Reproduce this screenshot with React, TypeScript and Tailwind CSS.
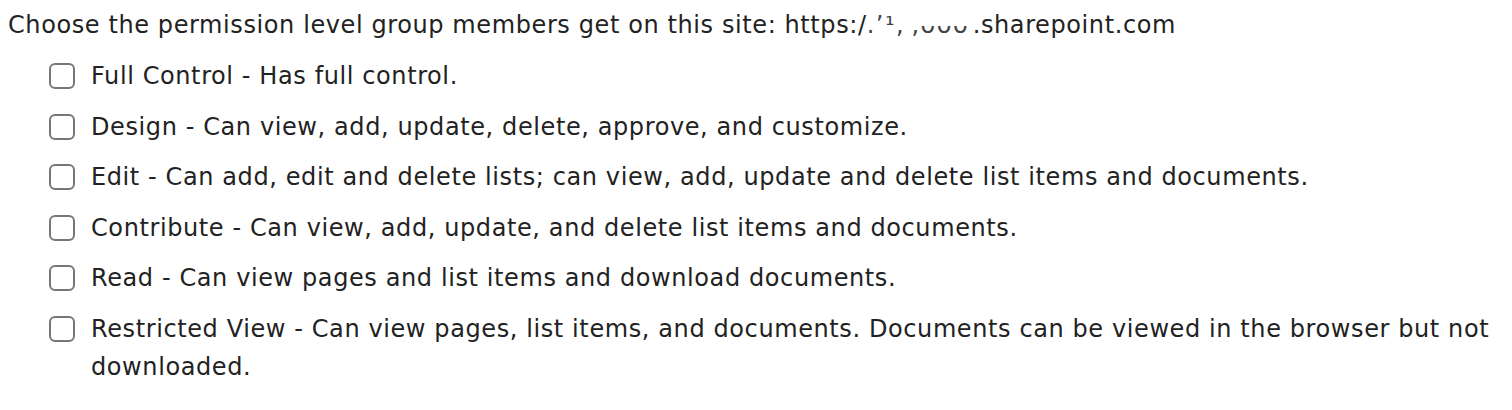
const levels = [
  "Full Control - Has full control.",
  "Design - Can view, add, update, delete, approve, and customize.",
  "Edit - Can add, edit and delete lists; can view, add, update and delete list items and documents.",
  "Contribute - Can view, add, update, and delete list items and documents.",
  "Read - Can view pages and list items and download documents.",
  "Restricted View - Can view pages, list items, and documents. Documents can be viewed in the browser but not downloaded.",
];

export default function App() {
  return (
    <div className="min-h-[410px] bg-white pl-2 pr-3 pt-[6px] text-[24px] leading-[38px] tracking-[0.6px] text-[#222] [font-family:'DejaVu_Sans',sans-serif]">
      <p className="whitespace-nowrap">
        Choose the permission level group members get on this site: https:/
        <span className="inline-block w-[106px] align-top tracking-[1.5px] text-[#444]">.&#8217;&#185;,&#8201;,&#7447;&#7447;&#7447;</span>
        .sharepoint.com
      </p>
      <ul className="mt-[13px] flex flex-col gap-[12.6px] pl-[41px]">
        {levels.map((l) => (
          <li key={l} className="flex items-start gap-4">
            <span className="mt-[6px] h-[26px] w-[26px] shrink-0 rounded-[6px] border-2 border-[#777] bg-white" />
            <span>{l}</span>
          </li>
        ))}
      </ul>
    </div>
  );
}
